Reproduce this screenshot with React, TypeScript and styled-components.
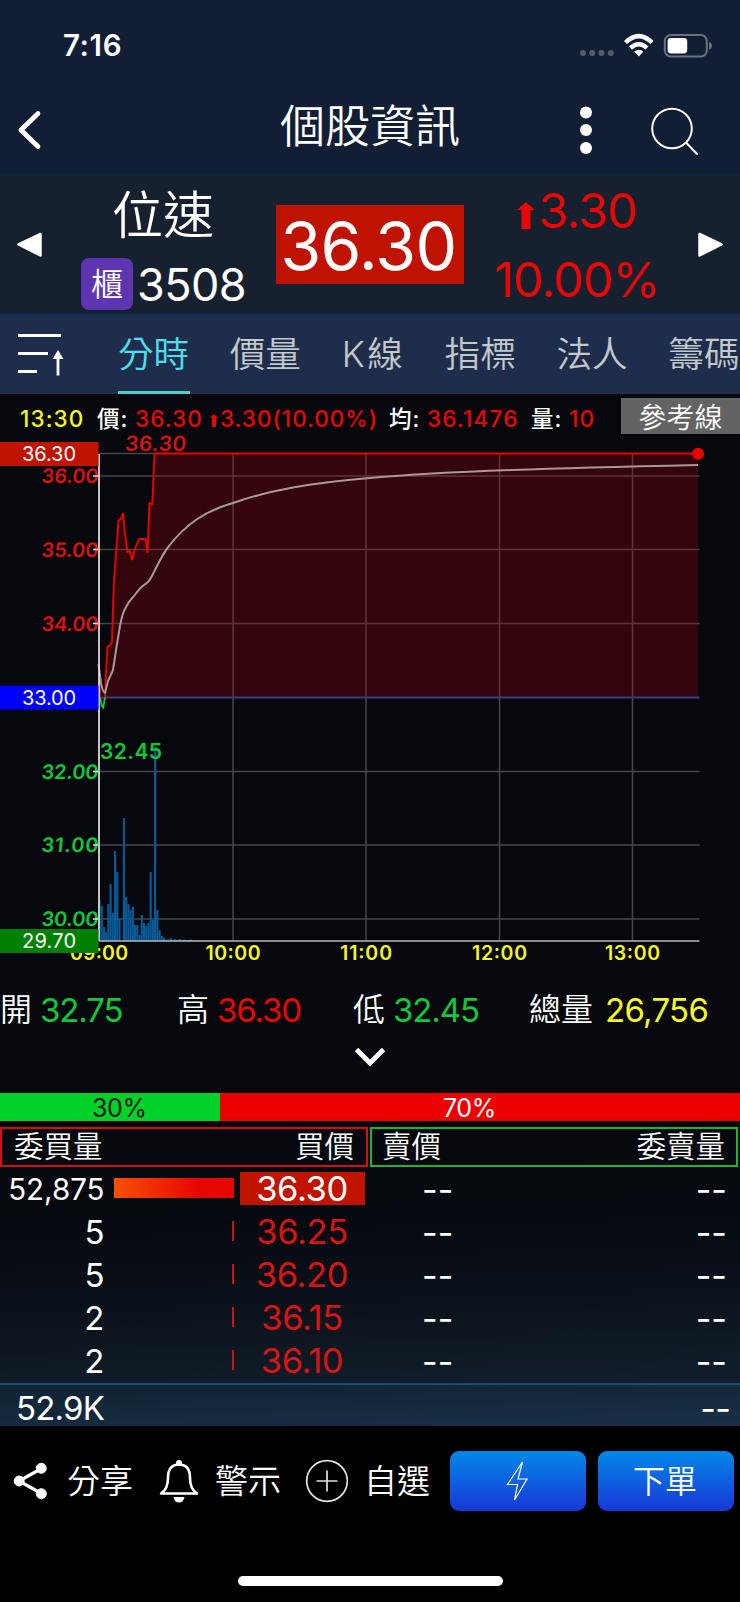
import React from "react";
import styled, { createGlobalStyle } from "styled-components";

const RED = "#ea0605";
const GREEN = "#0fc83c";
const YELLOW = "#f8f81c";

const GlobalStyle = createGlobalStyle`
  * { box-sizing: border-box; }
  svg { overflow: visible; }
  body {
    margin: 0;
    background: #000;
    color: #fff;
    font-family: Inter, "Noto Sans CJK TC", sans-serif;
    font-weight: 400;
  }
`;

const Screen = styled.main`
  width: 740px;
  height: 1602px;
  display: flex;
  flex-direction: column;
  overflow: hidden;
  background: #000;
`;

/* ---------- status bar and title ---------- */

const StatusBar = styled.div`
  height: 90px;
  flex: none;
  display: flex;
  justify-content: space-between;
  align-items: center;
  padding: 0 27px 0 63px;
  background: #121e33;
`;

const Clock = styled.span`
  font-size: 29.5px;
  font-weight: 600;
  letter-spacing: 0.6px;
`;

const TitleBar = styled.header`
  height: 86px;
  flex: none;
  display: grid;
  grid-template-columns: 60px 160px 300px 133px 87px;
  align-items: center;
  padding-bottom: 4px;
  background: #121e33;
  border-bottom: 2px solid #10294a;
`;

const Title = styled.h1`
  margin: 0;
  padding-bottom: 6px;
  text-align: center;
  font-size: 45px;
  line-height: 60px;
  font-weight: 350;
`;

/* ---------- quote header ---------- */

const Quote = styled.section`
  height: 138px;
  flex: none;
  display: grid;
  grid-template-columns: 60px 206px 210px 202px 62px;
  align-items: center;
  background: #16202f;
`;

const NameBlock = styled.div`
  display: flex;
  flex-direction: column;
  align-items: center;
  padding-top: 4px;
`;

const StockName = styled.div`
  font-size: 51px;
  line-height: 72px;
  padding-bottom: 2px;
  font-weight: 350;
`;

const CodeRow = styled.div`
  display: flex;
  align-items: center;
  gap: 4px;
  height: 60px;
`;

const MarketBadge = styled.span`
  width: 52px;
  height: 52px;
  border-radius: 8px;
  background: #5d35b1;
  font-size: 32px;
  line-height: 53px;
  font-weight: 350;
  text-align: center;
`;

const Code = styled.span`
  width: 108px;
  font-size: 45px;
  font-weight: 380;
  letter-spacing: -0.6px;
`;

const PriceBox = styled.div`
  width: 188px;
  height: 79px;
  margin: 0 0 2px 10px;
  background: #c01200;
  font-size: 66px;
  font-weight: 380;
  line-height: 82px;
  letter-spacing: -0.6px;
  padding-right: 3px;
  text-align: center;
`;

const Change = styled.div`
  display: flex;
  flex-direction: column;
  align-items: center;
  color: ${RED};
  font-size: 48.5px;
  font-weight: 380;
  line-height: 69px;
  letter-spacing: -0.9px;
`;

const ChangeLine = styled.div`
  display: flex;
  align-items: center;
  gap: 4px;
`;

const ChangeArrow = styled.span`
  display: flex;
  padding-top: 9px;
`;

/* ---------- tabs ---------- */

const Tabs = styled.nav`
  height: 80px;
  flex: none;
  display: flex;
  gap: 39.9px;
  overflow: hidden;
  background: #1f2d4c;
  border-top: 2px solid #0f2f55;
`;

const SortButton = styled.div`
  flex: none;
  width: 78px;
  padding: 17px 0 0 16px;
`;

const Tab = styled.div<{ $active?: boolean; $mixed?: boolean }>`
  flex: none;
  width: ${(p) => (p.$mixed ? 63 : 72)}px;
  letter-spacing: ${(p) => (p.$mixed ? 2.5 : 0)}px;
  font-size: 35.6px;
  line-height: 77px;
  font-weight: 350;
  white-space: nowrap;
  color: ${(p) => (p.$active ? "#4be0ec" : "#c3c8ca")};
  border-bottom: 3px solid ${(p) => (p.$active ? "#55c9d0" : "transparent")};
`;

/* ---------- chart ---------- */

const ChartInfo = styled.div`
  height: 44px;
  flex: none;
  display: grid;
  grid-template-columns: 97px 38px 75px 10px 169px 38px 104px 38px 52px 119px;
  align-items: start;
  background: #06080d;
  font-size: 22.5px;
  line-height: 49px;
  font-weight: 500;
  white-space: nowrap;
`;

const InfoText = styled.span<{ $color?: string; $pad?: number; $ls?: number }>`
  color: ${(p) => p.$color ?? "#fff"};
  padding-left: ${(p) => p.$pad ?? 0}px;
  letter-spacing: ${(p) => p.$ls ?? 1.1}px;
`;

const RefButton = styled.button`
  height: 36px;
  margin-top: 4px;
  padding: 0;
  border: 0;
  background: #636363;
  color: #fff;
  font: 350 28px/35px "Noto Sans CJK TC", sans-serif;
`;

const ChartArea = styled.div`
  height: 534px;
  flex: none;
  svg { display: block; }
  background: #06080d;
`;

/* ---------- stats ---------- */

const Stats = styled.div`
  height: 76px;
  flex: none;
  display: grid;
  grid-template-columns: 177px 176px 176px 1fr;
  align-items: center;
  padding-bottom: 1px;
  background: #06080d;
`;

const Stat = styled.div<{ $gap?: number }>`
  display: flex;
  align-items: center;
  gap: ${(p) => p.$gap ?? 8}px;
  font-size: 32px;
  line-height: 60px;
  font-weight: 350;
  white-space: nowrap;
`;

const StatValue = styled.span<{ $color: string; $ls?: number }>`
  color: ${(p) => p.$color};
  font-size: 33px;
  font-weight: 380;
  letter-spacing: ${(p) => p.$ls ?? -1.1}px;
`;

const Expand = styled.div`
  height: 45px;
  flex: none;
  display: flex;
  justify-content: center;
  background: #06080d;
  svg { margin-top: -1px; }
`;

/* ---------- order book ---------- */

const RatioBar = styled.div`
  height: 28px;
  flex: none;
  display: flex;
  font-size: 25px;
  font-weight: 370;
  line-height: 31px;
  letter-spacing: -0.4px;
`;

const Ratio = styled.div<{ $buy?: boolean }>`
  width: ${(p) => (p.$buy ? 220 : 520)}px;
  padding-left: ${(p) => (p.$buy ? 92 : 223)}px;
  background: ${(p) => (p.$buy ? "#00d228" : "#ec0000")};
  color: ${(p) => (p.$buy ? "#0a1410" : "#fff")};
`;

const Book = styled.section`
  height: 305px;
  flex: none;
  padding-top: 6px;
  background: linear-gradient(178deg, #06080d 0%, #06090f 30%, #0b121b 60%, #111d29 84%, #182a3b 100%);
`;

const BookHead = styled.div`
  display: grid;
  grid-template-columns: 368px 368px;
  gap: 2px;
`;

const SideHead = styled.div<{ $color: string; $left: number; $right: number }>`
  height: 40px;
  border: 2px solid ${(p) => p.$color};
  padding: 0 ${(p) => p.$right}px 0 ${(p) => p.$left}px;
  display: flex;
  justify-content: space-between;
  font-size: 29.5px;
  line-height: 35px;
  font-weight: 350;
`;

const Rows = styled.div`
  height: 216px;
`;

const Row = styled.div`
  height: 43px;
  display: grid;
  grid-template-columns: 105px 9px 120px 6px 125px 57px 233px 72px;
  align-items: center;
`;

const Volume = styled.span<{ $small?: boolean }>`
  text-align: right;
  font-size: ${(p) => (p.$small ? 29.5 : 33)}px;
  font-weight: 380;
  line-height: 43px;
  padding: 1px 0.5px 0 0;
`;

const Depth = styled.span<{ $full?: boolean }>`
  grid-column: 3;
  justify-self: end;
  width: ${(p) => (p.$full ? 120 : 2)}px;
  height: 20px;
  margin-bottom: 2px;
  background: ${(p) => (p.$full ? "linear-gradient(90deg, #f85004, #e60600 70%)" : "#c81414")};
`;

const Bid = styled.span<{ $filled?: boolean }>`
  grid-column: 5;
  height: 33px;
  margin-bottom: 1px;
  padding-right: 1px;
  text-align: center;
  font-size: 34.5px;
  font-weight: 380;
  line-height: 34px;
  letter-spacing: -0.4px;
  color: ${(p) => (p.$filled ? "#fff" : "#d81414")};
  background: ${(p) => (p.$filled ? "#c01400" : "transparent")};
`;

const Dash = styled.span<{ $col?: number }>`
  grid-column: ${(p) => p.$col ?? "auto"};
  justify-self: end;
  padding-top: 2px;
  font-size: 34px;
  line-height: 40px;
`;

const AskDash = styled(Dash)`
  justify-self: start;
`;

const Totals = styled.div`
  height: 43px;
  display: flex;
  justify-content: space-between;
  align-items: center;
  padding: 4px 10px 0 16px;
  border-top: 2px solid #17506f;
  background: rgba(22, 70, 110, 0.22);
  font-size: 33px;
  font-weight: 380;
  letter-spacing: -0.8px;
`;

/* ---------- footer ---------- */

const Footer = styled.footer`
  height: 110px;
  flex: none;
  display: grid;
  grid-template-columns: 67px 89px 59px 89px 60px 86px 136px 12px 136px;
  align-items: center;
  font-size: 33px;
  font-weight: 350;
  white-space: nowrap;
  svg { display: block; }
`;

const ActionLabel = styled.span`
  line-height: 48px;
`;

const BlueButton = styled.button<{ $col: number }>`
  grid-column: ${(p) => p.$col};
  height: 60px;
  padding: 0 2px 4px 0;
  border: 0;
  border-radius: 9px;
  display: flex;
  align-items: center;
  justify-content: center;
  color: #fff;
  font: 350 32px/54px "Noto Sans CJK TC", sans-serif;
  background: linear-gradient(180deg, #0488e9, #1738d6);
  svg { margin-top: 3px; }
`;

const HomeIndicator = styled.div`
  width: 265px;
  height: 10px;
  margin: 40px 0 0 238px;
  border-radius: 5px;
  background: #fff;
`;

/* Everything in the chart is in viewBox units: x 0-740, y 438-972. */
const PRICE_UP: [number, number][] = [
  [105, 697.5], [106.2, 668], [107.5, 646.5], [110.5, 645], [112, 641], [113, 607], [114.5, 572],
  [117, 541], [118.5, 520.5], [121, 519], [123, 513], [125, 534], [127.5, 552], [130, 551],
  [132, 560], [134.5, 550], [139, 539], [145.5, 539], [147.5, 553], [149.5, 503], [152.3, 504], [154.5, 453.5],
  [698, 453.5],
];

const AVERAGE =
  "M98.5 664 L101 683 Q103 693 105 693 L108 681 L113 670 Q116 649 120 626 Q122 614 126 607 Q129 601 134 596 Q140 588 144 585 Q149 582 152 576 C158 564 163 553 169 546 C186 524 205 511 233 503 C270 490 310 483 370 478 C450 471 560 468 698 465";

const VOLUMES = [
  41, 35, 14, 9, 37, 57, 28, 90, 69, 22, 0, 123, 44, 37, 31, 34, 16, 16, 6, 26, 18, 15, 18, 69, 21,
  194, 31, 11, 5, 3.5, 1.5, 1.5, 3, 1, 2, 1, 2, 1, 1.5, 1, 1, 1.5,
];

const LEVELS = [
  { y: 476, text: "36.00", up: true },
  { y: 549.5, text: "35.00", up: true },
  { y: 623.5, text: "34.00", up: true },
  { y: 771.5, text: "32.00", up: false },
  { y: 845, text: "31.00", up: false },
  { y: 919, text: "30.00", up: false },
];

const HOURS = [
  { x: 99, text: "09:00", w: 58 },
  { x: 233, text: "10:00", w: 55 },
  { x: 366, text: "11:00", w: 52 },
  { x: 499.5, text: "12:00", w: 55 },
  { x: 632.5, text: "13:00", w: 55 },
];

const TAGS = [
  { y: 442, text: "36.30", fill: "#c01400" },
  { y: 685.5, text: "33.00", fill: "#0000fe" },
  { y: 929, text: "29.70", fill: "#008000" },
];

function Chart() {
  const line = PRICE_UP.map((p) => p.join(",")).join(" ");
  return (
    <svg width="740" height="534" viewBox="0 438 740 534" fontFamily="Inter, sans-serif">
      <g stroke="#44454c" strokeWidth="1.5">
        <path d="M99 453.5H155" />
        {LEVELS.map((l) => <path key={l.y} d={`M99 ${l.y}H699.5`} />)}
        {HOURS.slice(1).map((h) => <path key={h.x} d={`M${h.x} 454V941`} />)}
      </g>
      <polygon points={`${line} 698,697.5`} fill="#b00008" fillOpacity="0.27" />
      <path d="M98.5 664 L100.5 697.5" stroke={RED} strokeWidth="1.6" />
      <path d="M99 697.5H699.5" stroke="#3f3a80" strokeWidth="1.8" />
      <polyline points={line} fill="none" stroke="#e80404" strokeWidth="1.9" />
      <path d="M100 697.5 L101.8 706 L103.2 707.5 L105 697.5" fill="none" stroke={GREEN} strokeWidth="1.8" />
      <path d={AVERAGE} fill="none" stroke="#a89a98" strokeWidth="2" />
      <circle cx="698" cy="453.7" r="6" fill="#ea0000" />
      {VOLUMES.map((v, i) => (
        <rect key={i} x={98.4 + i * 2.225} y={941 - v} width="2.15" height={v} fill="#085a96" />
      ))}
      <path d="M99 454V941" stroke="#d8d8d8" strokeWidth="1.8" />
      <path d="M99 941H699.5" stroke="#b8b8b8" strokeWidth="1.6" />
      <g fontSize="20" fontWeight="560">
        {LEVELS.map((l) => (
          <g key={l.text}>
            <text
              transform={`translate(41 ${l.y + 7.4}) skewX(-5)`}
              textLength="57"
              fill={l.up ? "#dc1010" : GREEN}
            >
              {l.text}
            </text>
            <path d={`M93 ${l.y}H98`} stroke="#ddd" strokeWidth="1.5" />
          </g>
        ))}
        <text transform="translate(124.5 451) skewX(-5)" fontSize="21" textLength="61" fill="#d81010">36.30</text>
        <text x="100" y="759" fontSize="21" textLength="62" fill={GREEN}>32.45</text>
      </g>
      <g fontSize="19.5" fontWeight="600" fill={YELLOW}>
        {HOURS.map((h) => (
          <text key={h.x} x={h.x - h.w / 2} y="960" textLength={h.w}>{h.text}</text>
        ))}
      </g>
      {TAGS.map((t) => (
        <g key={t.text}>
          <rect x="0" y={t.y} width="98.5" height="24" fill={t.fill} />
          <text x="22" y={t.y + 19} fontSize="20" textLength="54" fill="#fff">{t.text}</text>
        </g>
      ))}
    </svg>
  );
}

const TABS = ["分時", "價量", "K線", "指標", "法人", "籌碼"];

const BIDS = [
  { volume: "52,875", price: "36.30" },
  { volume: "5", price: "36.25" },
  { volume: "5", price: "36.20" },
  { volume: "2", price: "36.15" },
  { volume: "2", price: "36.10" },
];

const StatusIcons = () => (
  <svg width="134" height="28" viewBox="579 31 134 28">
    <g fill="#555d6d">
      {[583, 592.2, 601.4, 610.8].map((x) => <circle key={x} cx={x} cy="53" r="3" />)}
    </g>
    <g fill="none" stroke="#fff" strokeWidth="4.4">
      <path d="M625.5 42.5 Q638.8 29.8 652 42.5" />
      <path d="M630.5 48 Q638.8 40.5 647 48" />
    </g>
    <path d="M634.2 51.6 Q638.8 47.8 643.4 51.6 L638.8 56.4Z" fill="#fff" />
    <rect x="664.8" y="35" width="42" height="21.5" rx="6" fill="none" stroke="#6b7280" strokeWidth="2" />
    <rect x="667.6" y="38" width="19.6" height="15.5" rx="3.4" fill="#fff" />
    <path d="M709 42 Q712 43 712 45.7 Q712 48.5 709 49.5Z" fill="#6b7280" />
  </svg>
);

const Arrow = ({ w, h }: { w: number; h: number }) => (
  <svg width={w} height={h} viewBox="0 0 18 27" preserveAspectRatio="none">
    <path d="M9 0 L18 8 H13.5 V27 H4.5 V8 H0Z" fill={RED} />
  </svg>
);

export default function App() {
  return (
    <Screen>
      <GlobalStyle />
      <StatusBar>
        <Clock>7:16</Clock>
        <StatusIcons />
      </StatusBar>

      <TitleBar>
        <svg width="44" height="44" viewBox="0 108 44 44">
          <path d="M38 113.5 L21 130 L38 146.5" fill="none" stroke="#fff" strokeWidth="4.8" strokeLinecap="round" strokeLinejoin="round" />
        </svg>
        <span />
        <Title>個股資訊</Title>
        <svg width="133" height="52" viewBox="520 104 133 52" fill="#fff">
          <circle cx="586" cy="112.5" r="6" />
          <circle cx="586" cy="130" r="6" />
          <circle cx="586" cy="148" r="6" />
        </svg>
        <svg width="60" height="52" viewBox="650 104 60 52" fill="none" stroke="#fff" strokeWidth="2">
          <circle cx="669" cy="128.5" r="19.8" />
          <path d="M683.5 143 L694 154" strokeLinecap="round" />
        </svg>
      </TitleBar>

      <Quote>
        <svg width="60" height="26" viewBox="0 232 60 26">
          <path d="M18.5 244.5 L40.5 234 V255.5Z" fill="#fff" stroke="#fff" strokeWidth="2.5" strokeLinejoin="round" />
        </svg>
        <NameBlock>
          <StockName>位速</StockName>
          <CodeRow>
            <MarketBadge>櫃</MarketBadge>
            <Code>3508</Code>
          </CodeRow>
        </NameBlock>
        <PriceBox>36.30</PriceBox>
        <Change>
          <ChangeLine>
            <ChangeArrow><Arrow w={18} h={27} /></ChangeArrow>
            3.30
          </ChangeLine>
          <ChangeLine>10.00%</ChangeLine>
        </Change>
        <svg width="62" height="26" viewBox="678 232 62 26">
          <path d="M721.5 244.5 L699.5 234 V255.5Z" fill="#fff" stroke="#fff" strokeWidth="2.5" strokeLinejoin="round" />
        </svg>
      </Quote>

      <Tabs>
        <SortButton>
          <svg width="50" height="44" viewBox="16 333 50 44" stroke="#fff" strokeWidth="2.8">
            <path d="M18 335.5H61 M18 353.5H48 M18 371.5H37 M58 356V375.5" />
            <path d="M58 350 L63.5 359 H52.5Z" fill="#fff" stroke="none" />
          </svg>
        </SortButton>
        {TABS.map((t, i) => (
          <Tab key={t} $active={i === 0} $mixed={t === "K線"}>{t}</Tab>
        ))}
      </Tabs>

      <ChartInfo>
        <InfoText $color={YELLOW} $pad={20}>13:30</InfoText>
        <InfoText>價:</InfoText>
        <InfoText $color={RED}>36.30</InfoText>
        <span><Arrow w={8} h={13} /></span>
        <InfoText $color={RED} $ls={1}>3.30(10.00%)</InfoText>
        <InfoText>均:</InfoText>
        <InfoText $color={RED} $ls={1.2}>36.1476</InfoText>
        <InfoText>量:</InfoText>
        <InfoText $color={RED}>10</InfoText>
        <RefButton>參考線</RefButton>
      </ChartInfo>

      <ChartArea>
        <Chart />
      </ChartArea>

      <Stats>
        <Stat>開<StatValue $color={GREEN}>32.75</StatValue></Stat>
        <Stat>高<StatValue $color={RED}>36.30</StatValue></Stat>
        <Stat>低<StatValue $color={GREEN}>32.45</StatValue></Stat>
        <Stat $gap={12}>總量<StatValue $color={YELLOW} $ls={-0.7}>26,756</StatValue></Stat>
      </Stats>
      <Expand>
        <svg width="32" height="20" viewBox="354 1048 32 20">
          <path d="M356.5 1050.5 L370 1064 L383.5 1050.5" fill="none" stroke="#fff" strokeWidth="4.8" />
        </svg>
      </Expand>

      <RatioBar>
        <Ratio $buy>30%</Ratio>
        <Ratio>70%</Ratio>
      </RatioBar>

      <Book>
        <BookHead>
          <SideHead $color="#d30f0f" $left={12} $right={12}><span>委買量</span><span>買價</span></SideHead>
          <SideHead $color="#14b838" $left={10} $right={11}><span>賣價</span><span>委賣量</span></SideHead>
        </BookHead>
        <Rows>
          {BIDS.map((b, i) => (
            <Row key={b.price}>
              <Volume $small={i === 0}>{b.volume}</Volume>
              <Depth $full={i === 0} />
              <Bid $filled={i === 0}>{b.price}</Bid>
              <AskDash $col={7}>--</AskDash>
              <Dash $col={8}>--</Dash>
            </Row>
          ))}
        </Rows>
        <Totals>
          <span>52.9K</span>
          <Dash>--</Dash>
        </Totals>
      </Book>

      <Footer>
        <svg width="50" height="44" viewBox="0 1459 50 44" fill="#fff" stroke="#fff">
          <path d="M41.5 1468.5 L19 1481 L41.5 1493.5" fill="none" strokeWidth="3.2" />
          <circle cx="41.3" cy="1468.3" r="5" />
          <circle cx="19.2" cy="1481" r="5" />
          <circle cx="41.3" cy="1493.7" r="5" />
        </svg>
        <ActionLabel>分享</ActionLabel>
        <svg width="44" height="46" viewBox="156 1458 44 46" fill="none" stroke="#fff" strokeWidth="2.6">
          <path d="M161 1493.5 Q168 1489 168 1478 Q168 1464.5 179 1464.5 Q190 1464.5 190 1478 Q190 1489 197 1493.5Z" strokeLinejoin="round" />
          <circle cx="179" cy="1463" r="3" fill="#fff" stroke="none" />
          <path d="M173.5 1497 H184.5 Q183.5 1502.5 179 1502.5 Q174.5 1502.5 173.5 1497Z" fill="#fff" stroke="none" />
        </svg>
        <ActionLabel>警示</ActionLabel>
        <svg width="46" height="46" viewBox="304 1458 46 46" fill="none" stroke="#e4e4e4" strokeWidth="1.7">
          <circle cx="327" cy="1481" r="20.3" />
          <path d="M316.5 1481H337.5 M327 1470.5V1491.5" />
        </svg>
        <ActionLabel>自選</ActionLabel>
        <BlueButton $col={7} aria-label="閃電下單">
          <svg width="24" height="42" viewBox="506 1461 24 42" fill="none" stroke="#fff" strokeWidth="1.2">
            <path d="M523.5 1463 L508.5 1485.5 H518.5 L515.5 1501 L528 1480 H519Z" />
          </svg>
        </BlueButton>
        <BlueButton $col={9}>下單</BlueButton>
      </Footer>
      <HomeIndicator />
    </Screen>
  );
}
